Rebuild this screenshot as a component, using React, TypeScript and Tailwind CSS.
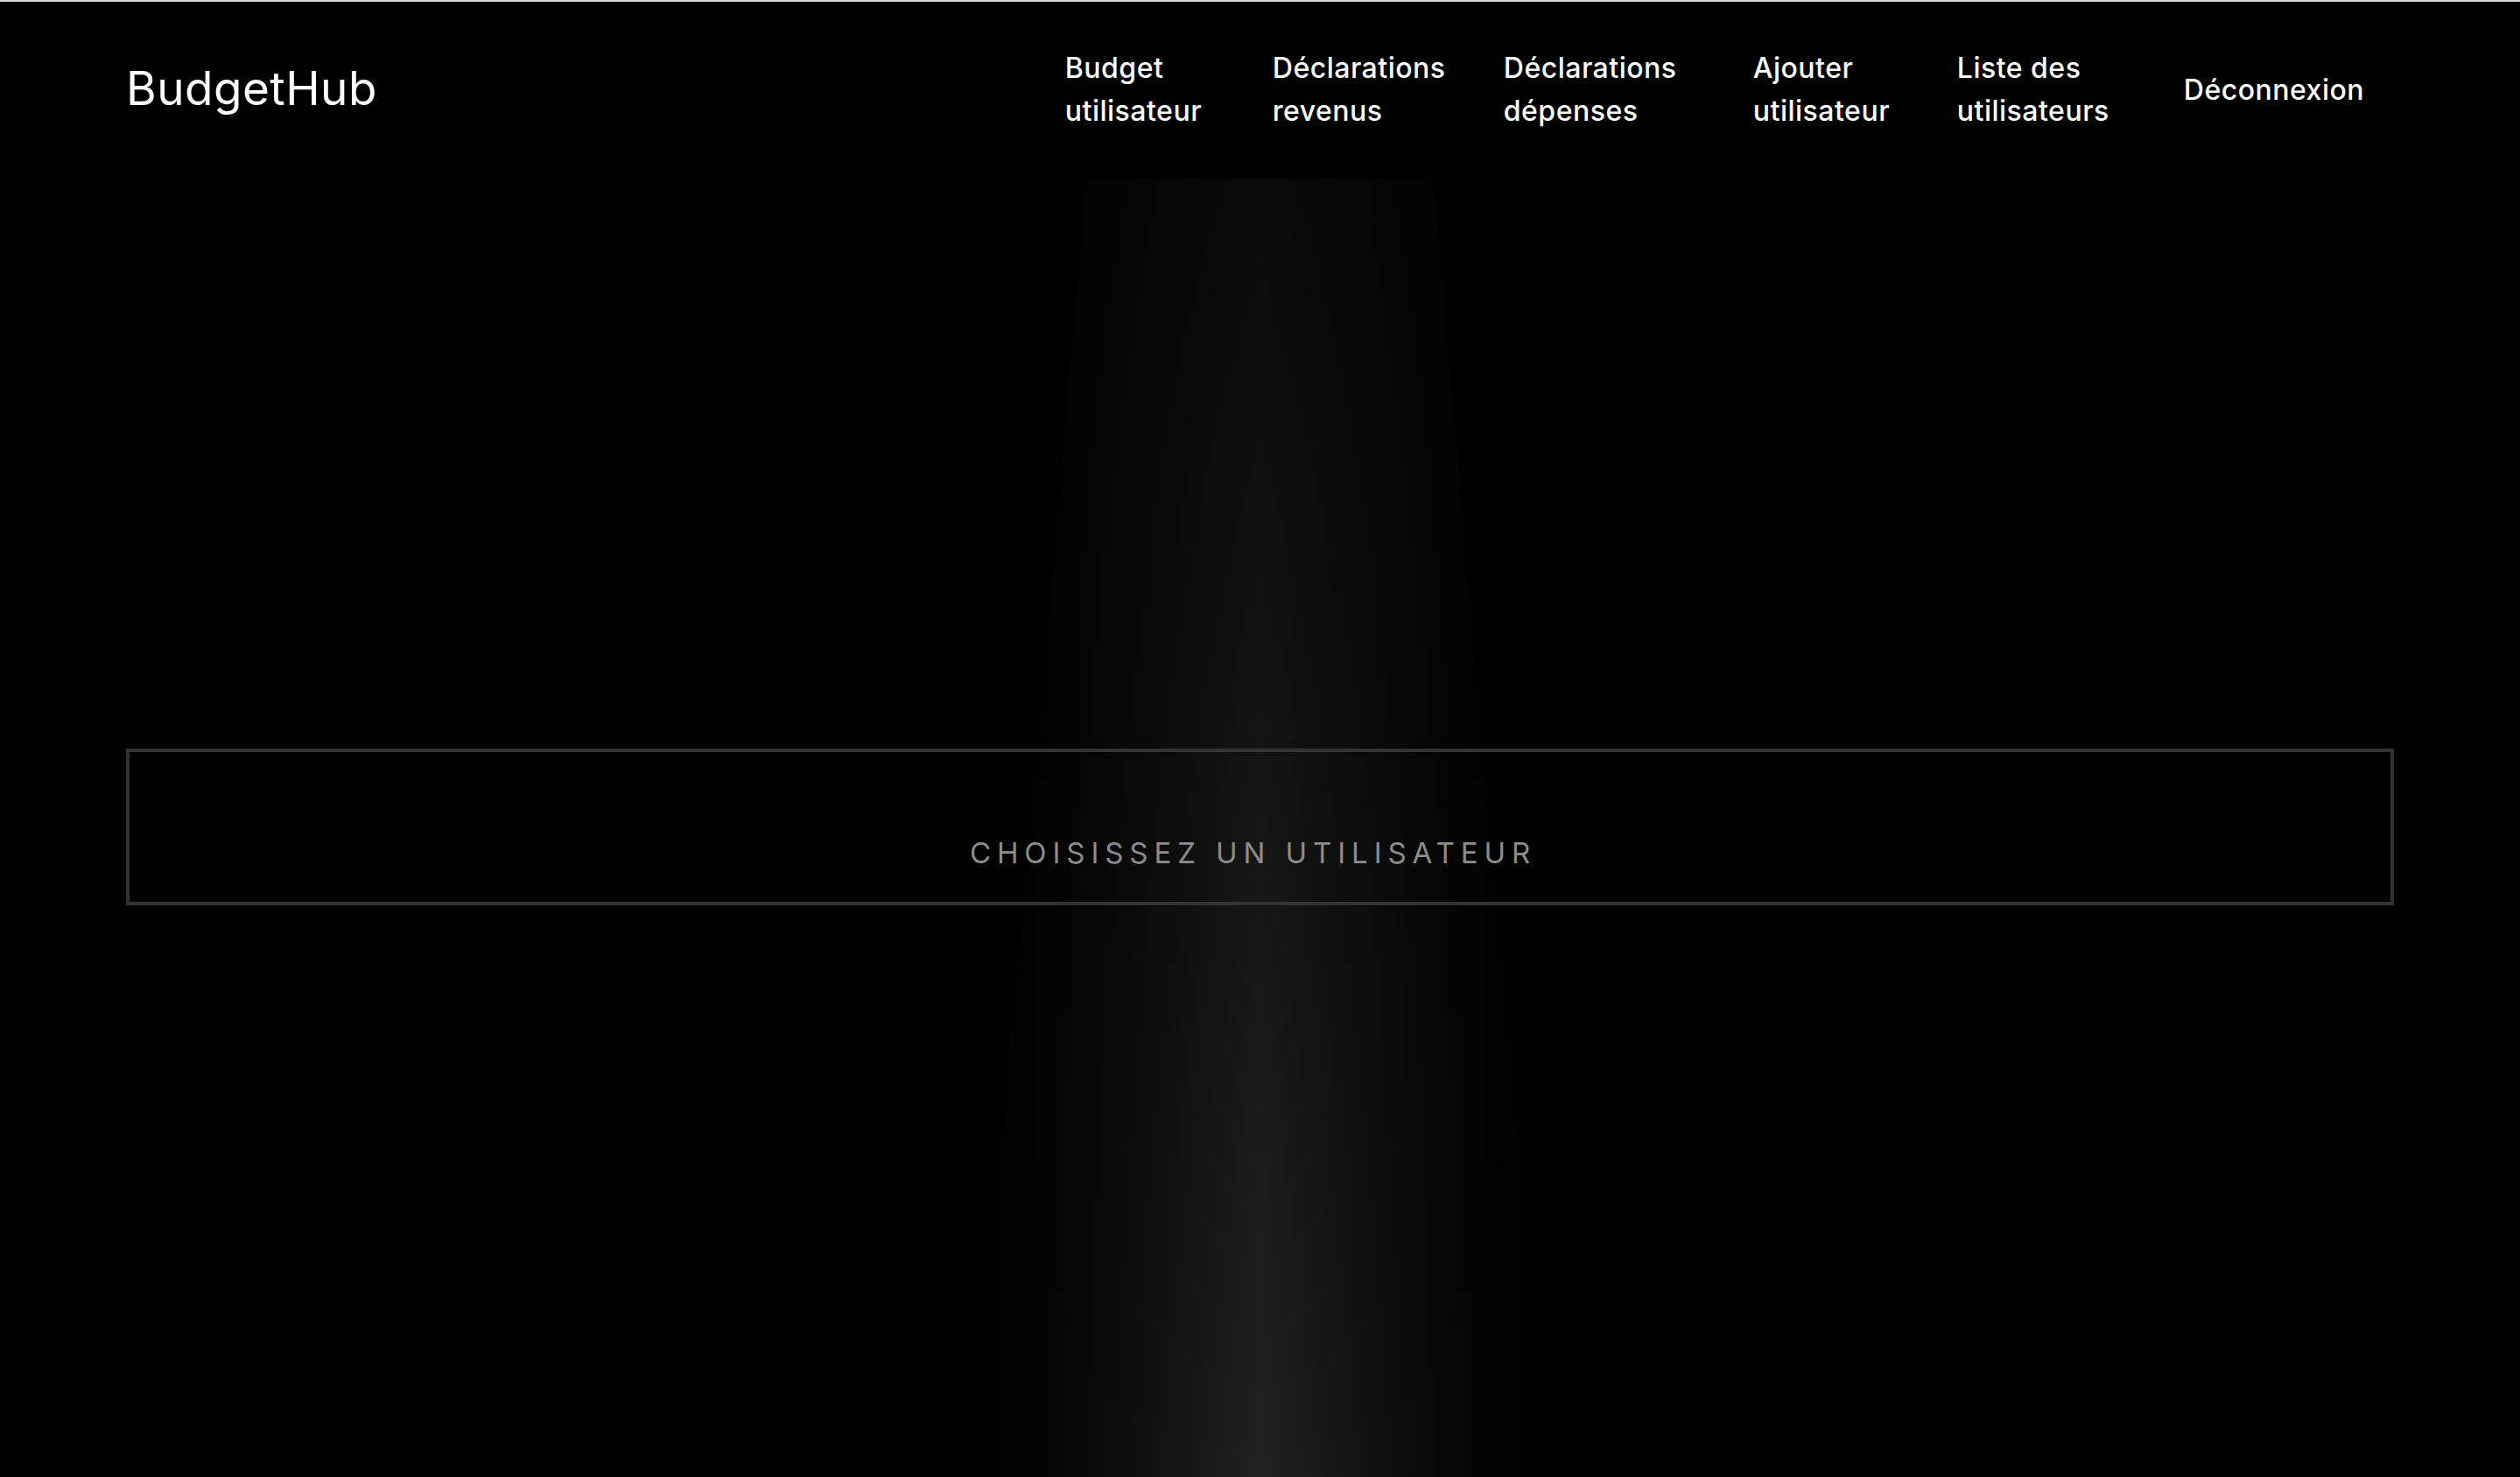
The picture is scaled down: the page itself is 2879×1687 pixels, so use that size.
import React from "react"

const links = [
  { label: ["Budget", "utilisateur"], w: "w-[237px]" },
  { label: ["Déclarations", "revenus"], w: "w-[264px]" },
  { label: ["Déclarations", "dépenses"], w: "w-[285px]" },
  { label: ["Ajouter", "utilisateur"], w: "w-[233px]" },
  { label: ["Liste des", "utilisateurs"], w: "w-[259px]" },
]

export default function App() {
  return (
    <div className="relative min-h-screen bg-black flex flex-col overflow-hidden border-t-2 border-[#d6d6d6] font-['Inter','Liberation_Sans',sans-serif]">
      {/* light beam behind the content */}
      <div className="pointer-events-none absolute top-[202px] bottom-0 left-1/2 -translate-x-1/2 w-[660px] [clip-path:polygon(20%_0,80%_0,100%_100%,0_100%)] bg-[linear-gradient(to_right,rgba(255,255,255,0)_0%,rgba(255,255,255,0.02)_15%,rgba(255,255,255,0.07)_32%,rgba(255,255,255,0.13)_50%,rgba(255,255,255,0.07)_68%,rgba(255,255,255,0.02)_85%,rgba(255,255,255,0)_100%)] [mask-image:linear-gradient(to_bottom,rgba(0,0,0,0.3),rgba(0,0,0,1))]" />

      <header className="relative w-[90%] mx-auto h-[200px] flex items-center justify-between">
        <a href="#" className="text-white text-[53px] font-normal tracking-[0.5px]">BudgetHub</a>
        <nav className="flex items-center">
          {links.map((l) => (
            <a key={l.label.join(" ")} href="#" className={`${l.w} text-white text-[32px] font-medium tracking-[0.5px] leading-[49px]`}>
              {l.label[0]}
              <br />
              {l.label[1]}
            </a>
          ))}
          <a href="#" className="text-white text-[32px] font-medium tracking-[0.5px] leading-[49px] pr-[34px]">Déconnexion</a>
        </nav>
      </header>

      <main className="relative flex-1 flex items-center">
        <div className="w-[90%] mx-auto h-[179px] border-4 border-[#333333] flex items-center justify-center">
          <h2 className="pt-[60px] pr-[16px] text-[#8c8c8c] text-[33px] uppercase tracking-[0.21em] leading-none">
            Choisissez un utilisateur
          </h2>
        </div>
      </main>
    </div>
  )
}
